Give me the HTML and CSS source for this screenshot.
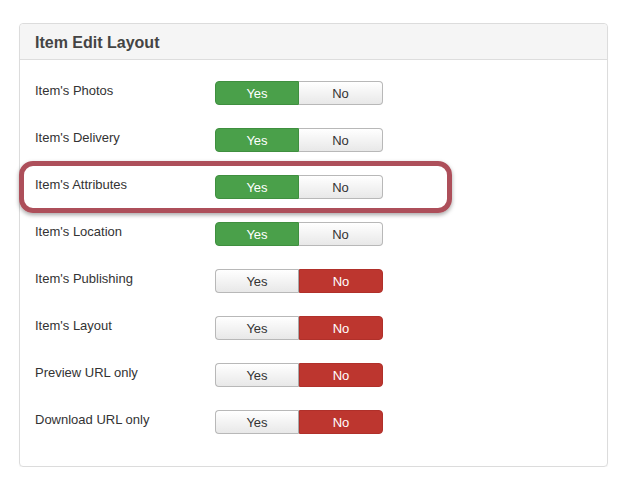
FILE: index.html
```html
<!DOCTYPE html>
<html>
<head>
<meta charset="utf-8">
<link rel="stylesheet" href="styles.css">
</head>
<body>
<div class="panel">
  <div class="panel-head">Item Edit Layout</div>
  <div class="panel-body">
    <div class="row"><div class="label">Item's Photos</div><div class="toggle"><span class="btn yes-on">Yes</span><span class="btn off">No</span></div></div>
    <div class="row"><div class="label">Item's Delivery</div><div class="toggle"><span class="btn yes-on">Yes</span><span class="btn off">No</span></div></div>
    <div class="row highlighted"><div class="label">Item's Attributes</div><div class="toggle"><span class="btn yes-on">Yes</span><span class="btn off">No</span></div></div>
    <div class="row"><div class="label">Item's Location</div><div class="toggle"><span class="btn yes-on">Yes</span><span class="btn off">No</span></div></div>
    <div class="row"><div class="label">Item's Publishing</div><div class="toggle"><span class="btn off">Yes</span><span class="btn no-on">No</span></div></div>
    <div class="row"><div class="label">Item's Layout</div><div class="toggle"><span class="btn off">Yes</span><span class="btn no-on">No</span></div></div>
    <div class="row"><div class="label">Preview URL only</div><div class="toggle"><span class="btn off">Yes</span><span class="btn no-on">No</span></div></div>
    <div class="row"><div class="label">Download URL only</div><div class="toggle"><span class="btn off">Yes</span><span class="btn no-on">No</span></div></div>
  </div>
</div>
</body>
</html>
```
FILE: styles.css
```css
html, body { margin: 0; padding: 0; background: #fff; }
body {
  font-family: "Liberation Sans", Arial, sans-serif;
  color: #333;
  padding: 23px 19px 0 19px;
}
.panel {
  width: 587px;
  border: 1px solid #dcdcdc;
  border-radius: 4px;
  box-shadow: 0 1px 1px rgba(0,0,0,0.05);
}
.panel-head {
  height: 35px;
  background: #f5f5f5;
  border-bottom: 1px solid #dddddd;
  border-radius: 4px 4px 0 0;
  padding-left: 15px;
  font-weight: bold;
  font-size: 16px;
  line-height: 37px;
  color: #444;
}
.panel-body {
  padding: 21px 15px 32px 15px;
  display: flex;
  flex-direction: column;
  gap: 23px;
}
.row {
  display: flex;
  height: 24px;
}
.label {
  width: 180px;
  font-size: 13px;
  line-height: 18px;
  padding-top: 1px;
  color: #333;
}
.toggle {
  display: flex;
  width: 168px;
  height: 24px;
}
.btn {
  box-sizing: border-box;
  width: 84px;
  height: 24px;
  text-align: center;
  font-size: 13px;
  line-height: 24px;
  border: 1px solid #b8b8b8;
}
.toggle .btn:first-child { border-radius: 4px 0 0 4px; }
.toggle .btn:last-child { border-radius: 0 4px 4px 0; }
.toggle .btn.off:first-child { border-right: 1px solid #aaa; }
.toggle .btn.off:last-child { border-left: none; }
.off {
  background: linear-gradient(#ffffff, #e8e8e8);
  color: #333;
}
.yes-on {
  background: #4aa04a;
  border-color: #3f8f3f;
  color: #fff;
}
.no-on {
  background: #bd362f;
  border-color: #b0302a;
  color: #fff;
}
.highlighted { position: relative; }
.highlighted::after {
  content: "";
  position: absolute;
  top: -14px;
  left: -16px;
  width: 433px;
  height: 52px;
  box-sizing: border-box;
  border: 5px solid #ad4f5a;
  border-radius: 14px;
  box-shadow: 0 2px 4px rgba(0,0,0,0.35);
  pointer-events: none;
}
```
